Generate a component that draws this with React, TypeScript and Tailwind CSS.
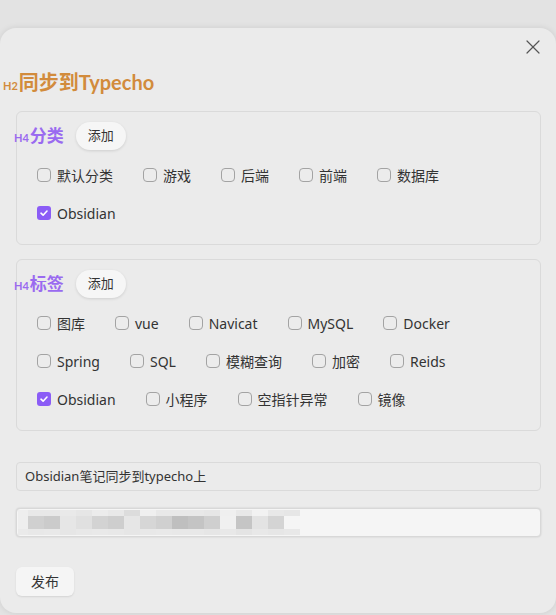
import { X } from "lucide-react";

const font = { fontFamily: '"Noto Sans", "Noto Sans CJK SC", sans-serif' };
const headFont = { fontFamily: 'Lato, "Noto Sans CJK SC", sans-serif' };

const categories = [
  { label: "默认分类", checked: false },
  { label: "游戏", checked: false },
  { label: "后端", checked: false },
  { label: "前端", checked: false },
  { label: "数据库", checked: false },
  { label: "Obsidian", checked: true },
];

const tags = [
  { label: "图库", checked: false },
  { label: "vue", checked: false },
  { label: "Navicat", checked: false },
  { label: "MySQL", checked: false },
  { label: "Docker", checked: false },
  { label: "Spring", checked: false },
  { label: "SQL", checked: false },
  { label: "模糊查询", checked: false },
  { label: "加密", checked: false },
  { label: "Reids", checked: false },
  { label: "Obsidian", checked: true },
  { label: "小程序", checked: false },
  { label: "空指针异常", checked: false },
  { label: "镜像", checked: false },
];

// blurred (mosaic) value in the second input
const mosaicTop = [
  "bg-[#eeeeee]", "bg-[#e8e8e8]", "bg-[#e8e8e8]", "bg-[#e9e9e9]", "bg-[#e6e6e6]", "bg-[#ececec]",
  "bg-[#e8e8e8]", "bg-[#dcdcdc]", "bg-[#efefef]", "bg-[#e8e8e8]", "bg-[#e8e8e8]", "bg-[#e8e8e8]",
  "bg-[#e6e6e6]", "bg-[#efefef]", "bg-[#e8e8e8]", "bg-[#f2f2f2]", "bg-[#e8e8e8]", "bg-[#e6e6e6]",
];
const mosaicMid = [
  "bg-[#eeeeee]", "bg-[#d0d0d0]", "bg-[#cbcbcb]", "bg-[#e6e6e6]", "bg-[#e0e0e0]", "bg-[#d3d3d3]",
  "bg-[#cecece]", "bg-[#e6e6e6]", "bg-[#d6d6d6]", "bg-[#d0d0d0]", "bg-[#bfbfbf]", "bg-[#c4c4c4]",
  "bg-[#cfcfcf]", "bg-[#f0f0f0]", "bg-[#c5c5c5]", "bg-[#e3e3e3]", "bg-[#d4d4d4]", "bg-[#f5f5f5]",
];
const mosaicBot = [
  "bg-[#eaeaea]", "bg-[#e8e8e8]", "bg-[#e9e9e9]", "bg-[#e6e6e6]", "bg-[#e8e8e8]", "bg-[#e9e9e9]",
  "bg-[#e8e8e8]", "bg-[#e6e6e6]", "bg-[#e8e8e8]", "bg-[#e9e9e9]", "bg-[#e8e8e8]", "bg-[#e8e8e8]",
  "bg-[#e6e6e6]", "bg-[#e8e8e8]", "bg-[#e4e4e4]", "bg-[#e8e8e8]", "bg-[#e6e6e6]", "bg-[#e8e8e8]",
];

function Check({ label, checked }: { label: string; checked: boolean }) {
  return (
    <label className="flex items-center gap-[6px] h-[22px] text-[14px] text-[#333]">
      {checked ? (
        <span className="w-[14px] h-[14px] rounded-[3px] bg-[#8b5cf6] flex items-center justify-center">
          <svg width="10" height="10" viewBox="0 0 10 10" fill="none">
            <path d="M2 5.2 4.1 7.2 8 3" stroke="white" strokeWidth="1.6" strokeLinecap="round" strokeLinejoin="round" />
          </svg>
        </span>
      ) : (
        <span className="w-[14px] h-[14px] rounded-[4px] border border-[#a3a3a3] bg-[#ececec]" />
      )}
      <span>{label}</span>
    </label>
  );
}

function Section({ title, items }: { title: string; items: { label: string; checked: boolean }[] }) {
  return (
    <div className="border border-[#dadada] rounded-[6px] pl-5 pr-4 pt-[10px] pb-[20px]">
      <div className="flex items-center -ml-[23px]">
        <span className="flex items-baseline text-[#9a6af0] font-bold" style={headFont}>
          <span className="text-[11px] mr-[1px]">H4</span>
          <span className="text-[17px]">{title}</span>
        </span>
        <button className="ml-[12px] h-[28px] px-3 rounded-full bg-[#f6f6f6] text-[13px] text-[#333] shadow-[0_1px_3px_rgba(0,0,0,0.12)]">
          添加
        </button>
      </div>
      <div className="mt-[14px] flex flex-wrap gap-x-[30px] gap-y-[16px]">
        {items.map((it) => (
          <Check key={it.label + it.checked} label={it.label} checked={it.checked} />
        ))}
      </div>
    </div>
  );
}

export default function App() {
  return (
    <div className="min-h-screen bg-[#e3e3e3] pt-[28px]" style={font}>
      <div className="relative h-[585px] rounded-[16px] bg-[#ebebeb] shadow-[0_0_6px_rgba(0,0,0,0.1)] pl-4 pr-[15px] pt-[40px]">
        <button className="absolute top-[7px] right-[11px] text-[#555]">
          <X size={24} strokeWidth={1.2} />
        </button>

        <h2
          className="-ml-[13px] flex items-baseline h-[28px] leading-[28px] text-[#d28b3c] font-bold"
          style={headFont}
        >
          <span className="text-[11px] mr-[1px]">H2</span>
          <span className="text-[20px]">同步到Typecho</span>
        </h2>

        <div className="mt-[15px] flex flex-col gap-[14px]">
          <Section title="分类" items={categories} />
          <Section title="标签" items={tags} />
        </div>

        <div className="mt-[31px] h-[29px] border border-[#dadada] rounded-[4px] px-2 flex items-center text-[13px] text-[#333]">
          Obsidian笔记同步到typecho上
        </div>

        <div className="mt-[17px] h-[29px] rounded-[4px] bg-[#f5f5f5] border border-[#d8d8d8] shadow-[0_0_2px_rgba(0,0,0,0.15)] flex items-stretch py-[1px]">
          <div className="flex ml-[1px]">
            {mosaicMid.map((c, i) => (
              <div key={i} className={"flex flex-col " + (i === 0 ? "w-[10px]" : "w-4")}>
                <div className={"h-[6px] " + mosaicTop[i]} />
                <div className={"h-[15px] " + c} />
                <div className={"h-[6px] " + mosaicBot[i]} />
              </div>
            ))}
          </div>
        </div>

        <button className="mt-[30px] h-[29px] px-[15px] rounded-[6px] bg-[#f5f5f5] text-[14px] text-[#333] shadow-[0_1px_2px_rgba(0,0,0,0.1)]">
          发布
        </button>
      </div>
    </div>
  );
}
